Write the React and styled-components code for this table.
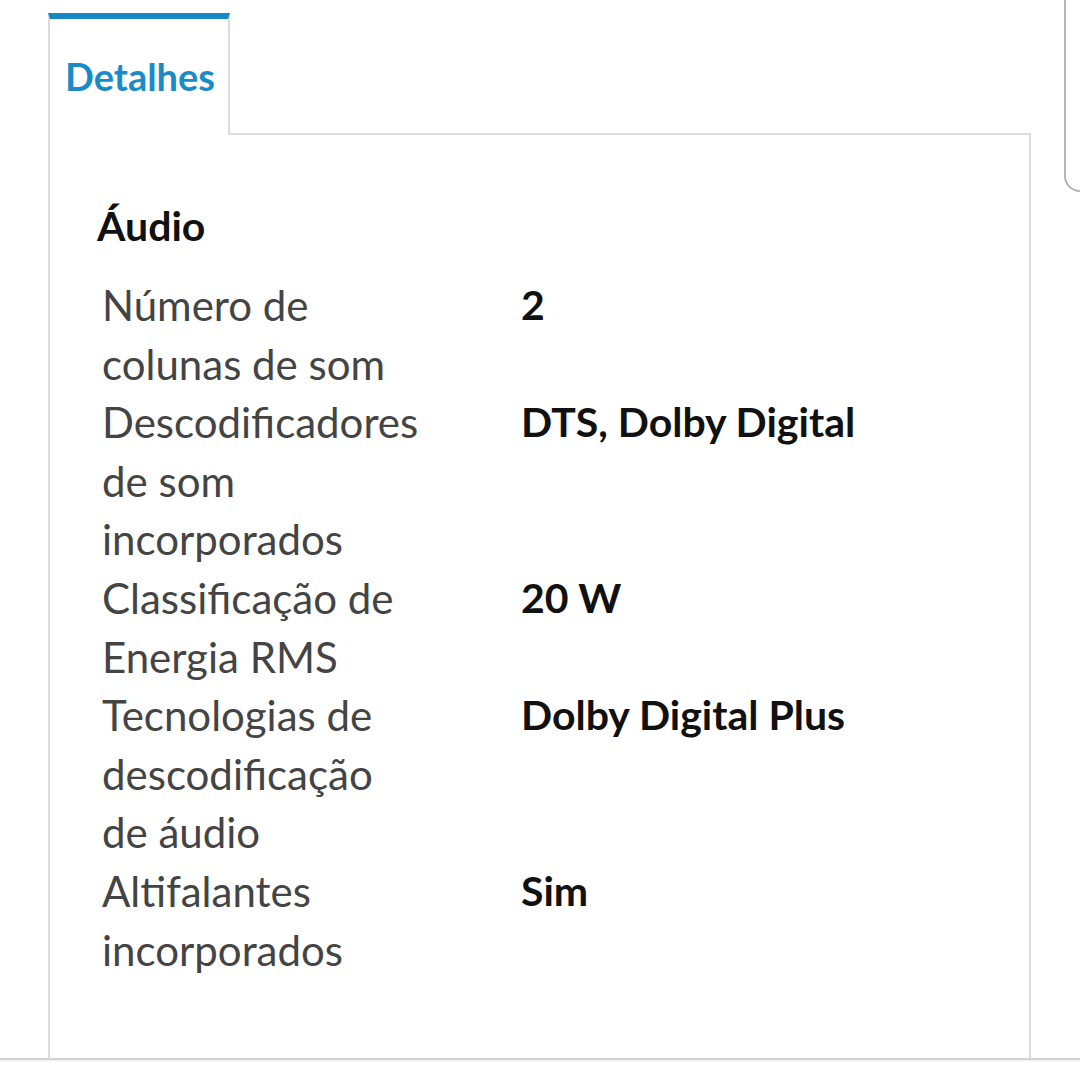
import React from 'react';
import styled, { createGlobalStyle } from 'styled-components';

const GlobalStyle = createGlobalStyle`
  html, body {
    margin: 0;
    padding: 0;
    background: #fff;
    font-family: Lato, "Open Sans", sans-serif;
  }
`;

const Page = styled.div`
  position: relative;
  width: 1080px;
  height: 1066px;
  overflow: hidden;
  background: #fff;
`;

const TabsRow = styled.div`
  display: flex;
  padding-top: 13px;
  padding-left: 48px;
`;

const Tab = styled.div`
  box-sizing: border-box;
  width: 182px;
  height: 122px;
  border-top: 6px solid #1788c6;
  border-left: 2px solid #dcdcdc;
  border-right: 2px solid #dcdcdc;
  padding: 34px 0 0 15px;
  color: #1a8bc9;
  font-size: 38px;
  font-weight: 700;
  line-height: 46px;
`;

const TabFiller = styled.div`
  box-sizing: border-box;
  width: 801px;
  height: 122px;
  border-bottom: 2px solid #dcdcdc;
`;

const Panel = styled.div`
  box-sizing: border-box;
  margin-left: 48px;
  width: 983px;
  height: 923px;
  border-left: 2px solid #dcdcdc;
  border-right: 2px solid #dcdcdc;
  padding: 67px 0 0 47px;
`;

const Heading = styled.h2`
  margin: 0 0 26px;
  font-size: 41px;
  font-weight: 700;
  line-height: 48px;
  color: #111;
`;

const Specs = styled.div`
  display: grid;
  grid-template-columns: 419px 1fr;
  padding-left: 5px;
  line-height: 58.6px;
`;

const Label = styled.div`
  color: #444;
  font-size: 42px;
  padding-right: 99px;
`;

const Value = styled.div`
  color: #111;
  font-size: 41px;
  font-weight: 700;
`;

const BottomRule = styled.div`
  height: 2px;
  background: #d2d2d2;
  box-shadow: 0 1px 2px rgba(0, 0, 0, 0.08);
`;

const ScrollEdge = styled.div`
  position: absolute;
  top: -20px;
  left: 1064px;
  width: 40px;
  height: 212px;
  box-sizing: border-box;
  border-left: 2px solid #b4b4b4;
  border-bottom: 2px solid #b4b4b4;
  border-bottom-left-radius: 16px;
`;

const specs = [
  ['Número de colunas de som', '2'],
  ['Descodificadores de som incorporados', 'DTS, Dolby Digital'],
  ['Classificação de Energia RMS', '20 W'],
  ['Tecnologias de descodificação de áudio', 'Dolby Digital Plus'],
  ['Altifalantes incorporados', 'Sim'],
];

export default function App() {
  return (
    <Page>
      <GlobalStyle />
      <TabsRow>
        <Tab>Detalhes</Tab>
        <TabFiller />
      </TabsRow>
      <Panel>
        <Heading>Áudio</Heading>
        <Specs>
          {specs.map(([label, value]) => (
            <React.Fragment key={label}>
              <Label>{label}</Label>
              <Value>{value}</Value>
            </React.Fragment>
          ))}
        </Specs>
      </Panel>
      <BottomRule />
      <ScrollEdge />
    </Page>
  );
}
